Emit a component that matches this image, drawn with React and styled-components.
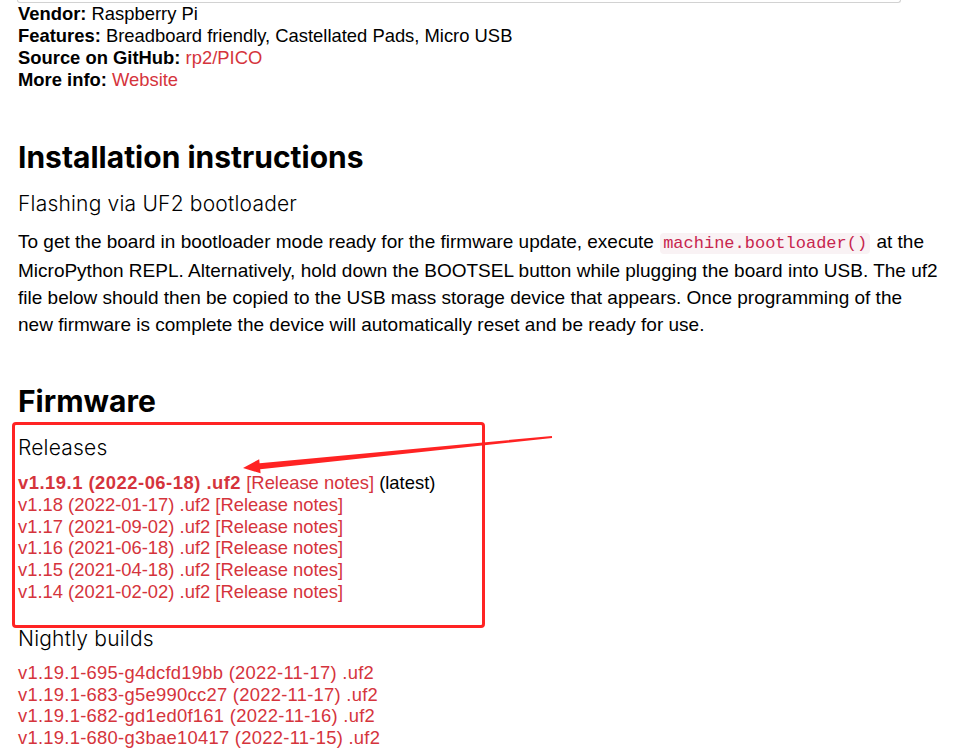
import React from "react";
import styled, { createGlobalStyle } from "styled-components";

const Global = createGlobalStyle`
  html, body { margin: 0; padding: 0; background: #fff; }
  body { font-family: "Liberation Sans", Arial, sans-serif; color: #000; }
`;

const Page = styled.div`
  width: 963px;
  height: 755px;
  overflow: hidden;
`;

const TopCard = styled.div`
  margin-left: 17px;
  width: 882px;
  height: 2px;
  border: 1px solid #d2d2d2;
  border-top: none;
  border-radius: 0 0 8px 8px;
`;

const Content = styled.div`
  padding-left: 18px;
`;

const Meta = styled.div`
  font-size: 18.4px;
  line-height: 22px;
`;

const MetaRow = styled.div`
  white-space: nowrap;
`;

const Label = styled.b`
  font-weight: 700;
`;

const Link = styled.a`
  color: #d5343c;
  text-decoration: none;
  font-weight: ${(p) => (p.$bold ? 700 : 400)};
  ${(p) => (p.$bold ? "letter-spacing: 0.5px;" : "")}
`;

const H2 = styled.h2`
  font-family: Inter, "Liberation Sans", sans-serif;
  font-weight: 700;
  font-size: 30px;
  line-height: 34px;
  margin: ${(p) => p.$mt}px 0 0;
`;

const H5 = styled.h5`
  font-family: Inter, "Liberation Sans", sans-serif;
  font-weight: 300;
  font-size: 21px;
  letter-spacing: 0.2px;
  line-height: 24px;
  margin: ${(p) => p.$mt}px 0 0;
`;

const Para = styled.p`
  font-size: 19px;
  line-height: 27px;
  margin: 12px 0 0;
  white-space: nowrap;
`;

const Code = styled.code`
  font-family: "Liberation Mono", monospace;
  font-size: 17px;
  color: #c7254e;
  background: #f9f2f4;
  border-radius: 4px;
  padding: 1px 3px;
  margin: 0 1px;
`;

const Releases = styled.div`
  position: relative;
  margin-top: 18px;
`;

const Highlight = styled.div`
  position: absolute;
  left: -6px;
  top: -14px;
  width: 467px;
  height: 200px;
  border: 3px solid #ff2323;
  border-radius: 4px;
  pointer-events: none;
`;

const Arrow = styled.svg`
  position: absolute;
  left: 220px;
  top: -5px;
  overflow: visible;
`;

const List = styled.div`
  margin-top: ${(p) => p.$mt}px;
  font-size: 18.4px;
  line-height: 21.8px;
`;

const Row = styled.div`
  white-space: nowrap;
  letter-spacing: ${(p) => p.$ls || "0"};
`;

const Latest = styled.span`
  color: #000;
`;

const releases = [
  ["v1.18", "2022-01-17"],
  ["v1.17", "2021-09-02"],
  ["v1.16", "2021-06-18"],
  ["v1.15", "2021-04-18"],
  ["v1.14", "2021-02-02"],
];

const nightlies = [
  "v1.19.1-695-g4dcfd19bb (2022-11-17) .uf2",
  "v1.19.1-683-g5e990cc27 (2022-11-17) .uf2",
  "v1.19.1-682-gd1ed0f161 (2022-11-16) .uf2",
  "v1.19.1-680-g3bae10417 (2022-11-15) .uf2",
];

export default function App() {
  return (
    <Page>
      <Global />
      <TopCard />
      <Content>
        <Meta>
          <MetaRow><Label>Vendor:</Label> Raspberry Pi</MetaRow>
          <MetaRow><Label>Features:</Label> Breadboard friendly, Castellated Pads, Micro USB</MetaRow>
          <MetaRow><Label>Source on GitHub:</Label> <Link href="#">rp2/PICO</Link></MetaRow>
          <MetaRow><Label>More info:</Label> <Link href="#">Website</Link></MetaRow>
        </Meta>

        <H2 $mt={49}>Installation instructions</H2>
        <H5 $mt={18}>Flashing via UF2 bootloader</H5>
        <Para>
          To get the board in bootloader mode ready for the firmware update, execute <Code>machine.bootloader()</Code> at the
          <br />
          MicroPython REPL. Alternatively, hold down the BOOTSEL button while plugging the board into USB. The uf2
          <br />
          file below should then be copied to the USB mass storage device that appears. Once programming of the
          <br />
          new firmware is complete the device will automatically reset and be ready for use.
        </Para>

        <H2 $mt={46}>Firmware</H2>
        <Releases>
          <H5 $mt={0}>Releases</H5>
          <List $mt={12}>
            <Row>
              <Link href="#" $bold>v1.19.1 (2022-06-18) .uf2</Link> <Link href="#">[Release notes]</Link> <Latest>(latest)</Latest>
            </Row>
            {releases.map(([v, d]) => (
              <Row key={v}>
                <Link href="#">{v} ({d}) .uf2</Link> <Link href="#">[Release notes]</Link>
              </Row>
            ))}
          </List>
          <Highlight />
          <Arrow width="340" height="45" viewBox="0 0 340 45">
            <polygon
              points="5,37 21.2,28.3 21.6,32.3 313.9,5 314.1,7 22.2,38.3 22.6,42.3"
              fill="#ff2323"
            />
          </Arrow>
        </Releases>

        <H5 $mt={24}>Nightly builds</H5>
        <List $mt={11}>
          {nightlies.map((n) => (
            <Row key={n} $ls="0.27px">
              <Link href="#">{n}</Link>
            </Row>
          ))}
        </List>
      </Content>
    </Page>
  );
}
